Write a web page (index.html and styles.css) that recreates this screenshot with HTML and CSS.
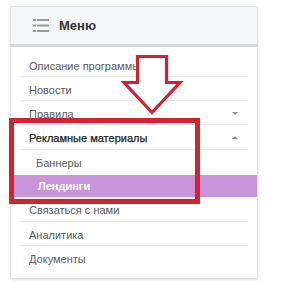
FILE: index.html
```html
<!DOCTYPE html>
<html lang="ru">
<head>
<meta charset="utf-8">
<link rel="stylesheet" href="styles.css">
</head>
<body>
<div class="card">
  <div class="header">
    <svg class="burger" width="16" height="13" viewBox="0 0 16 13">
      <g fill="#9a9a9a">
        <rect x="0" y="0" width="3" height="2"/><rect x="4" y="0" width="12" height="2"/>
        <rect x="0" y="5.5" width="3" height="2"/><rect x="4" y="5.5" width="12" height="2"/>
        <rect x="0" y="11" width="3" height="2"/><rect x="4" y="11" width="12" height="2"/>
      </g>
    </svg>
    <span class="title">Меню</span>
  </div>
  <ul class="menu">
    <li class="item">Описание программы</li>
    <li class="item">Новости</li>
    <li class="item has-caret">Правила<span class="caret down"></span></li>
    <li class="item strong has-caret">Рекламные материалы<span class="caret up"></span></li>
    <li class="item sub">Баннеры</li>
    <li class="item sub active">Лендинги</li>
    <li class="item tall">Связаться с нами</li>
    <li class="item">Аналитика</li>
    <li class="item last">Документы</li>
  </ul>
</div>
<div class="highlight"></div>
<svg class="arrow" width="290" height="298" viewBox="0 0 290 298">
  <polygon points="137.5,56.5 166.5,56.5 166.5,82.5 180,82.5 152,112.5 124,82.5 137.5,82.5" fill="#fff" stroke="#d42230" stroke-width="3.2" stroke-linejoin="miter"/>
</svg>
</body>
</html>
```
FILE: styles.css
```css
html, body {
  margin: 0;
  padding: 0;
  background: #fff;
}
body {
  position: relative;
  width: 290px;
  height: 298px;
  overflow: hidden;
  font-family: "Liberation Sans", Arial, sans-serif;
}
.card {
  margin: 6px 0 0 10px;
  width: 246px;
  background: #fff;
  border: 1px solid #e2e2e2;
  border-radius: 2px;
  box-shadow: 0 1px 3px rgba(0,0,0,0.12);
}
.header {
  height: 37px;
  background: #f5f6f8;
  border-bottom: 3px solid #d8d9db;
  display: flex;
  align-items: center;
  padding-left: 22px;
}
.burger {
  display: block;
}
.title {
  margin-left: 10px;
  font-size: 13px;
  font-weight: bold;
  color: #333;
}
.menu {
  list-style: none;
  margin: 0;
  padding: 6px 0 9px;
}
.item {
  position: relative;
  height: 23px;
  line-height: 26px;
  margin: 0 9px;
  padding-left: 9px;
  border-bottom: 1px solid #ececec;
  font-size: 11px;
  color: #5a5a5a;
}
.item.strong {
  color: #222;
  height: 24px;
  -webkit-text-stroke: 0.25px #222;
}
.item.sub {
  padding-left: 16px;
  border-bottom: none;
  height: 25px;
}
.item.active {
  margin: 0;
  padding-left: 27px;
  background: #c994d9;
  color: #fff;
  font-weight: bold;
  height: 22px;
  line-height: 23px;
}
.item.tall {
  height: 24px;
}
.item.last {
  border-bottom: none;
}
.caret {
  position: absolute;
  right: 10px;
  top: 11px;
  width: 0;
  height: 0;
  border-left: 3px solid transparent;
  border-right: 3px solid transparent;
}
.caret.down {
  border-top: 3px solid #8d8d8d;
}
.caret.up {
  border-bottom: 3px solid #8d8d8d;
}
.highlight {
  position: absolute;
  left: 9px;
  top: 118px;
  width: 181px;
  height: 76px;
  border: 5px solid #d42230;
}
.arrow {
  position: absolute;
  left: 0;
  top: 0;
}
```
